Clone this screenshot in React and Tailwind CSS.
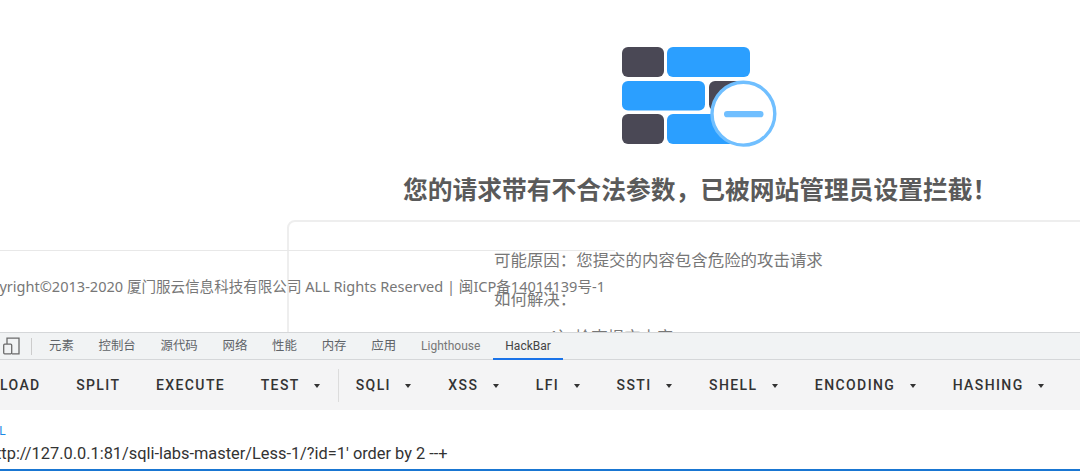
const cjk = "font-['Noto_Sans','Open_Sans','Noto_Sans_CJK_SC',sans-serif]";

function WallIcon() {
  return (
    <svg width="156" height="100" viewBox="0 0 156 100" className="block ml-[622px]">
      <rect x="0" y="0" width="42" height="30" rx="6" fill="#4a4855" />
      <rect x="45" y="0" width="83" height="30" rx="6" fill="#2b9fff" />
      <rect x="0" y="34" width="83" height="29.5" rx="6" fill="#2b9fff" />
      <rect x="87" y="34" width="42" height="29.5" rx="6" fill="#4a4855" />
      <rect x="0" y="67" width="42" height="30" rx="6" fill="#4a4855" />
      <rect x="45" y="67" width="83" height="30" rx="6" fill="#2b9fff" />
      <circle cx="121.4" cy="66.7" r="31.4" fill="#ffffff" stroke="#70bfff" strokeWidth="3.4" />
      <rect x="102" y="64" width="39.5" height="6.3" rx="3.1" fill="#70bfff" />
    </svg>
  );
}

function DeviceIcon() {
  return (
    <svg width="18" height="18" viewBox="0 0 18 18" className="ml-[2px] shrink-0" fill="none" stroke="#6b6b6b" strokeWidth="1.3">
      <path d="M5 7V1.2h12v15.6H10" />
      <rect x="1.7" y="7.2" width="8" height="9.6" rx="1" />
    </svg>
  );
}

const tabs = ["控制台", "源代码", "网络", "性能", "内存", "应用"];

function Caret() {
  return <span className="ml-[14.5px] mr-[1.4px] w-0 h-0 border-x-[3px] border-x-transparent border-t-[4px] border-t-[#333]" />;
}

function Btn({ label, caret }) {
  return (
    <div className="flex items-center shrink-0">
      <span>{label}</span>
      {caret && <Caret />}
    </div>
  );
}

export default function App() {
  return (
    <div className="w-[1080px] h-[476px] overflow-hidden bg-white flex flex-col">
      <div className="relative h-[332px] shrink-0 overflow-hidden pt-[47px]">
        <WallIcon />
        <h1 className={`${cjk} mt-[26px] ml-[403px] text-[24.77px] leading-[34px] font-bold text-[#5a5a5a] whitespace-nowrap`}>
          您的请求带有不合法参数，已被网站管理员设置拦截！
        </h1>
        <div className={`${cjk} mt-[13px] ml-[287px] w-[900px] h-[200px] border-2 border-[#eeeeee] rounded-tl-[8px] pl-[205px] pt-[18px] text-[16.45px] leading-[39px] text-[#777] whitespace-nowrap`}>
          <p>可能原因：您提交的内容包含危险的攻击请求</p>
          <p>如何解决：</p>
          <p className="pl-[55px] -mt-[1px]">1）检查提交内容</p>
        </div>
        <div className={`${cjk} absolute left-0 top-[250px] w-[615px] h-[70px] border-t border-[#e8e8e8] pt-[25px] pr-[10px] flex justify-end text-[14.55px] leading-[21px] text-[#777] whitespace-nowrap`}>
          <span className="shrink-0">Copyright©2013-2020 厦门服云信息科技有限公司 ALL Rights Reserved | 闽ICP备14014139号-1</span>
        </div>
      </div>

      <div className="h-[28px] shrink-0 bg-[#f1f3f4] border-y border-[#d5d7d9] flex items-center text-[12px] text-[#5f6368] font-['Roboto','Noto_Sans_CJK_SC',sans-serif] whitespace-nowrap">
        <DeviceIcon />
        <span className="ml-[11px] w-px h-[17px] bg-[#ccc] shrink-0" />
        <span className="ml-[17px] text-[12.4px]">元素</span>
        {tabs.map((t) => (
          <span key={t} className="ml-[24.8px] text-[12.4px]">{t}</span>
        ))}
        <span className="ml-[25px] text-[#777]">Lighthouse</span>
        <div className="ml-[13px] h-full px-[12px] flex items-center border-b-2 border-[#1a73e8] mb-[-1px] pt-[1px] text-[#444]">HackBar</div>
      </div>

      <div className="h-[50px] shrink-0 bg-[#f4f4f5] pt-[1px] flex items-center gap-[35.5px] text-[14px] font-medium tracking-[1.4px] text-[#333] font-['Roboto',sans-serif] whitespace-nowrap">
        <Btn label="LOAD" />
        <Btn label="SPLIT" />
        <Btn label="EXECUTE" />
        <Btn label="TEST" caret />
        <span className="w-px h-[33px] bg-[#dcdcdc] -ml-[18.9px] -mr-[19px] shrink-0" />
        <Btn label="SQLI" caret />
        <Btn label="XSS" caret />
        <Btn label="LFI" caret />
        <Btn label="SSTI" caret />
        <Btn label="SHELL" caret />
        <Btn label="ENCODING" caret />
        <Btn label="HASHING" caret />
      </div>

      <div className="h-[61px] shrink-0 border-b-2 border-[#1976d2] mb-[3px] font-['Roboto',sans-serif] whitespace-nowrap pt-[14px]">
        <div className="text-[12px] leading-[14px] text-[#1e88e5] ml-[-16px]">URL</div>
        <div className="text-[16.37px] leading-[24px] text-[#333] ml-[-13px] mt-[4px]">http://127.0.0.1:81/sqli-labs-master/Less-1/?id=1' order by 2 --+</div>
      </div>
    </div>
  );
}
